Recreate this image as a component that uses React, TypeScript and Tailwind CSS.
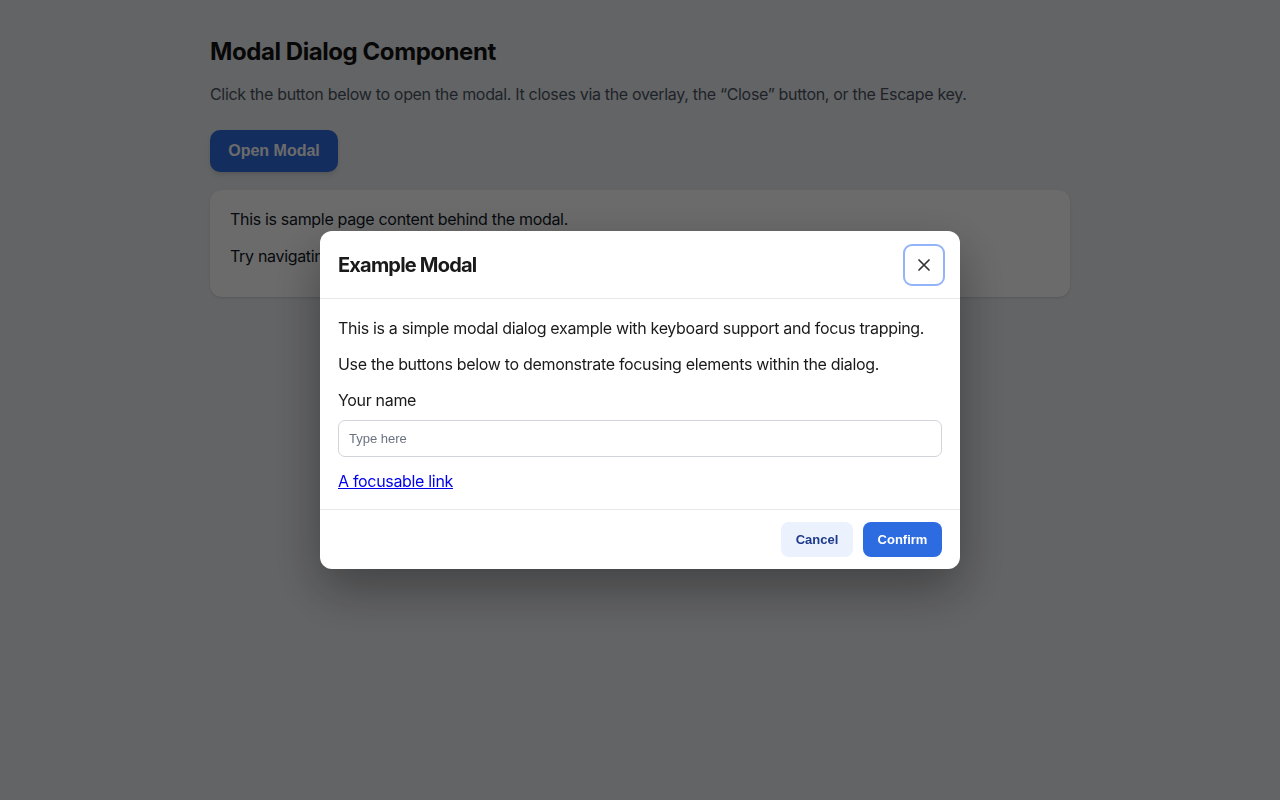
import React from "react";

export default function App() {
  return (
    <div className="relative min-h-[800px] w-full bg-[#eceef1] text-[#111827]" style={{ fontFamily: "Inter, 'Noto Sans', sans-serif" }}>
      <div className="mx-auto w-[860px] pt-[36px]">
        <h1 className="text-[24px] font-bold leading-[32px] tracking-[-0.018em] text-[#111]">Modal Dialog Component</h1>
        <p className="mt-[14px] text-[16px] leading-[24px] tracking-[-0.02em] text-[#4b5563]">
          Click the button below to open the modal. It closes via the overlay, the “Close” button, or the Escape key.
        </p>
        <button
          className="mt-[24px] h-[42px] w-[128px] rounded-[10px] bg-[#2d6be0] text-[16px] font-bold text-white shadow-md"
          style={{ fontFamily: "'Liberation Sans', Arial, sans-serif" }}
        >
          Open Modal
        </button>
        <div className="mt-[18px] rounded-[12px] bg-white px-[20px] pt-[17px] pb-[29px] text-[16px] leading-[24px] tracking-[-0.02em] shadow-sm">
          <p>This is sample page content behind the modal.</p>
          <p className="mt-[13px]">Try navigating with Tab; focus stays inside the dialog while it is open.</p>
        </div>
      </div>

      <div className="fixed inset-0 flex items-center justify-center bg-black/[0.58]">
        <div className="w-[640px] rounded-[12px] bg-white shadow-[0_20px_50px_rgba(0,0,0,0.35)]">
          <div className="flex h-[68px] items-center justify-between border-b border-[#e5e7eb] pl-[18px] pr-[15px]">
            <h2 className="text-[20px] font-bold tracking-[-0.04em] text-[#1a1a1a]">Example Modal</h2>
            <button className="flex h-[42px] w-[42px] items-center justify-center rounded-[9px] border-2 border-[#93b4f8] text-[#333]">
              <svg width="14" height="14" viewBox="0 0 14 14" fill="none" stroke="currentColor" strokeWidth="1.7" strokeLinecap="round">
                <path d="M2 2L12 12M12 2L2 12" />
              </svg>
            </button>
          </div>
          <div className="px-[18px] pt-[17px] pb-[16px] text-[16px] leading-[24px] tracking-[-0.02em] text-[#1a1a1a]">
            <p>This is a simple modal dialog example with keyboard support and focus trapping.</p>
            <p className="mt-[12px]">Use the buttons below to demonstrate focusing elements within the dialog.</p>
            <label className="mt-[12px] block">Your name</label>
            <input
              placeholder="Type here"
              className="mt-[8px] block h-[37px] w-full rounded-[7px] border border-[#d1d5db] px-[10px] text-[13px] tracking-normal placeholder:text-[#6b7280]"
              style={{ fontFamily: "'Liberation Sans', Arial, sans-serif" }}
            />
            <a href="#" className="mt-[12px] inline-block text-[#0000ee] underline">A focusable link</a>
          </div>
          <div className="flex justify-end gap-[10px] border-t border-[#e5e7eb] px-[18px] pt-[12px] pb-[12px]" style={{ fontFamily: "'Liberation Sans', Arial, sans-serif" }}>
            <button className="h-[35px] w-[72px] rounded-[8px] bg-[#ebf1fd] text-[13px] font-bold text-[#1e3a8a]">Cancel</button>
            <button className="h-[35px] w-[79px] rounded-[8px] bg-[#2d6be0] text-[13px] font-bold text-white">Confirm</button>
          </div>
        </div>
      </div>
    </div>
  );
}
